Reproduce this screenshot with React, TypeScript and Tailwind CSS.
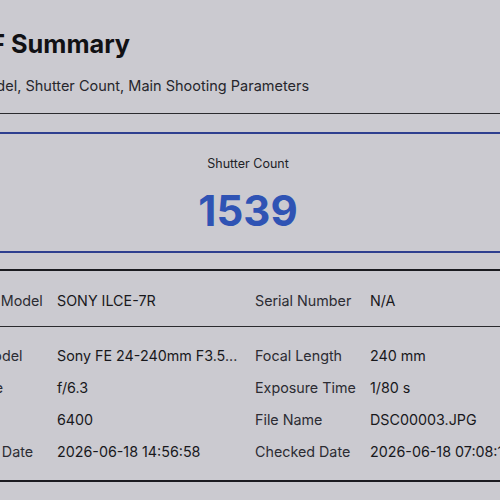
import React from 'react';

const rows: [string, string, string, string][] = [
  ['Lens Model', 'Sony FE 24-240mm F3.5...', 'Focal Length', '240 mm'],
  ['Aperture', 'f/6.3', 'Exposure Time', '1/80 s'],
  ['ISO', '6400', 'File Name', 'DSC00003.JPG'],
  ['Capture Date', '2026-06-18 14:56:58', 'Checked Date', '2026-06-18 07:08:12'],
];

function Row({ cells }: { cells: [string, string, string, string] }) {
  return (
    <div className="grid grid-cols-[113px_198px_115px_1fr] h-[32px] items-center pl-[16px] whitespace-nowrap">
      <span className="text-[#2c2c33]">{cells[0]}</span>
      <span className="text-[#18181c]">{cells[1]}</span>
      <span className="text-[#2c2c33]">{cells[2]}</span>
      <span className="text-[#18181c]">{cells[3]}</span>
    </div>
  );
}

export default function App() {
  return (
    <div className="w-[500px] h-[500px] overflow-hidden bg-[#cbcad0] font-['Inter',sans-serif] text-[#1b1b20]">
      <div className="-ml-[72px] w-[640px]">
        <header className="pt-[27px] pb-[16px] border-b border-[#2a2a2e] whitespace-nowrap">
          <h1 className="ml-[21px] text-[25.3px] leading-[33px] font-bold text-[#111114]">EXIF Summary</h1>
          <p className="-ml-[11px] mt-[15px] text-[14.5px] leading-[22px] text-[#26262c]">
            Camera Model, Shutter Count, Main Shooting Parameters
          </p>
        </header>

        <section className="mt-[18px] border-y-2 border-[#2e3f8f] pt-[21px] pb-[16px] text-center">
          <div className="text-[12.5px] leading-[18px] text-[#222227]">Shutter Count</div>
          <div className="mt-[14px] text-[42px] leading-[48px] font-bold text-[#2f53b4]">1539</div>
        </section>

        <div className="mt-[16px] border-y-2 border-[#1b1b20] text-[14.3px]">
          <div className="h-[56px] flex items-center pt-[5px] border-b border-[#2a2a2e]">
            <div className="grid grid-cols-[113px_198px_115px_1fr] w-full items-center pl-[16px] whitespace-nowrap">
              <span className="text-[#2c2c33]">Camera Model</span>
              <span className="text-[#18181c]">SONY ILCE-7R</span>
              <span className="text-[#2c2c33]">Serial Number</span>
              <span className="text-[#18181c]">N/A</span>
            </div>
          </div>
          <div className="pt-[13px] pb-[12px]">
            {rows.map((r) => (
              <Row key={r[0]} cells={r} />
            ))}
          </div>
        </div>
      </div>
    </div>
  );
}
